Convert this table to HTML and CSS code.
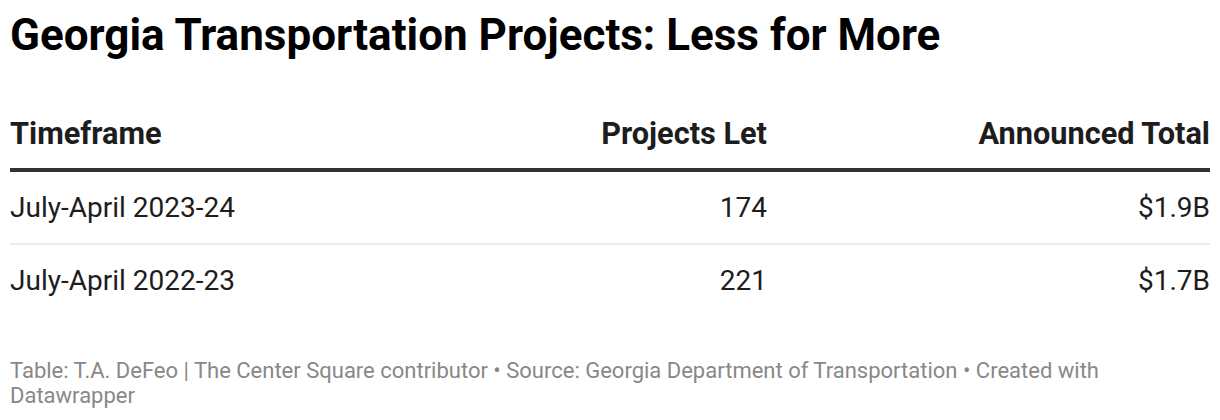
FILE: index.html
```html
<!DOCTYPE html>
<html>
<head>
<meta charset="utf-8">
<link rel="stylesheet" href="styles.css">
</head>
<body>
<div class="chart">
  <h1 class="title">Georgia Transportation Projects: Less for More</h1>
  <div class="table">
    <div class="row head">
      <div class="cell">Timeframe</div>
      <div class="cell num">Projects Let</div>
      <div class="cell num">Announced Total</div>
    </div>
    <div class="row body">
      <div class="cell">July-April 2023-24</div>
      <div class="cell num">174</div>
      <div class="cell num">$1.9B</div>
    </div>
    <div class="row body last">
      <div class="cell">July-April 2022-23</div>
      <div class="cell num">221</div>
      <div class="cell num">$1.7B</div>
    </div>
  </div>
  <div class="footer">Table: T.A. DeFeo | The Center Square contributor • Source: Georgia Department of Transportation • Created with Datawrapper</div>
</div>
</body>
</html>
```

FILE: styles.css
```css
html, body {
  margin: 0;
  padding: 0;
  background: #ffffff;
}
body {
  font-family: Roboto, "Liberation Sans", sans-serif;
  color: #1d1d1d;
}
.chart {
  padding: 9px 10px 0 10px;
}
.title {
  margin: 0;
  font-size: 44px;
  font-weight: 700;
  line-height: 52px;
  color: #000000;
}
.table {
  margin-top: 55px;
}
.row {
  display: grid;
  grid-template-columns: 400px 357px 443px;
}
.head {
  font-size: 30.7px;
  font-weight: 700;
  color: #1d1d1d;
  border-bottom: 4px solid #333333;
  padding-bottom: 16px;
  line-height: 36px;
}
.body {
  font-size: 28px;
  font-weight: 400;
  line-height: 34px;
  padding: 19px 0 18px;
  border-bottom: 2px solid #ebebeb;
}
.body.last {
  border-bottom: none;
}
.num {
  text-align: right;
}
.footer {
  margin-top: 43px;
  font-size: 22px;
  line-height: 24.5px;
  color: #888888;
}
```
